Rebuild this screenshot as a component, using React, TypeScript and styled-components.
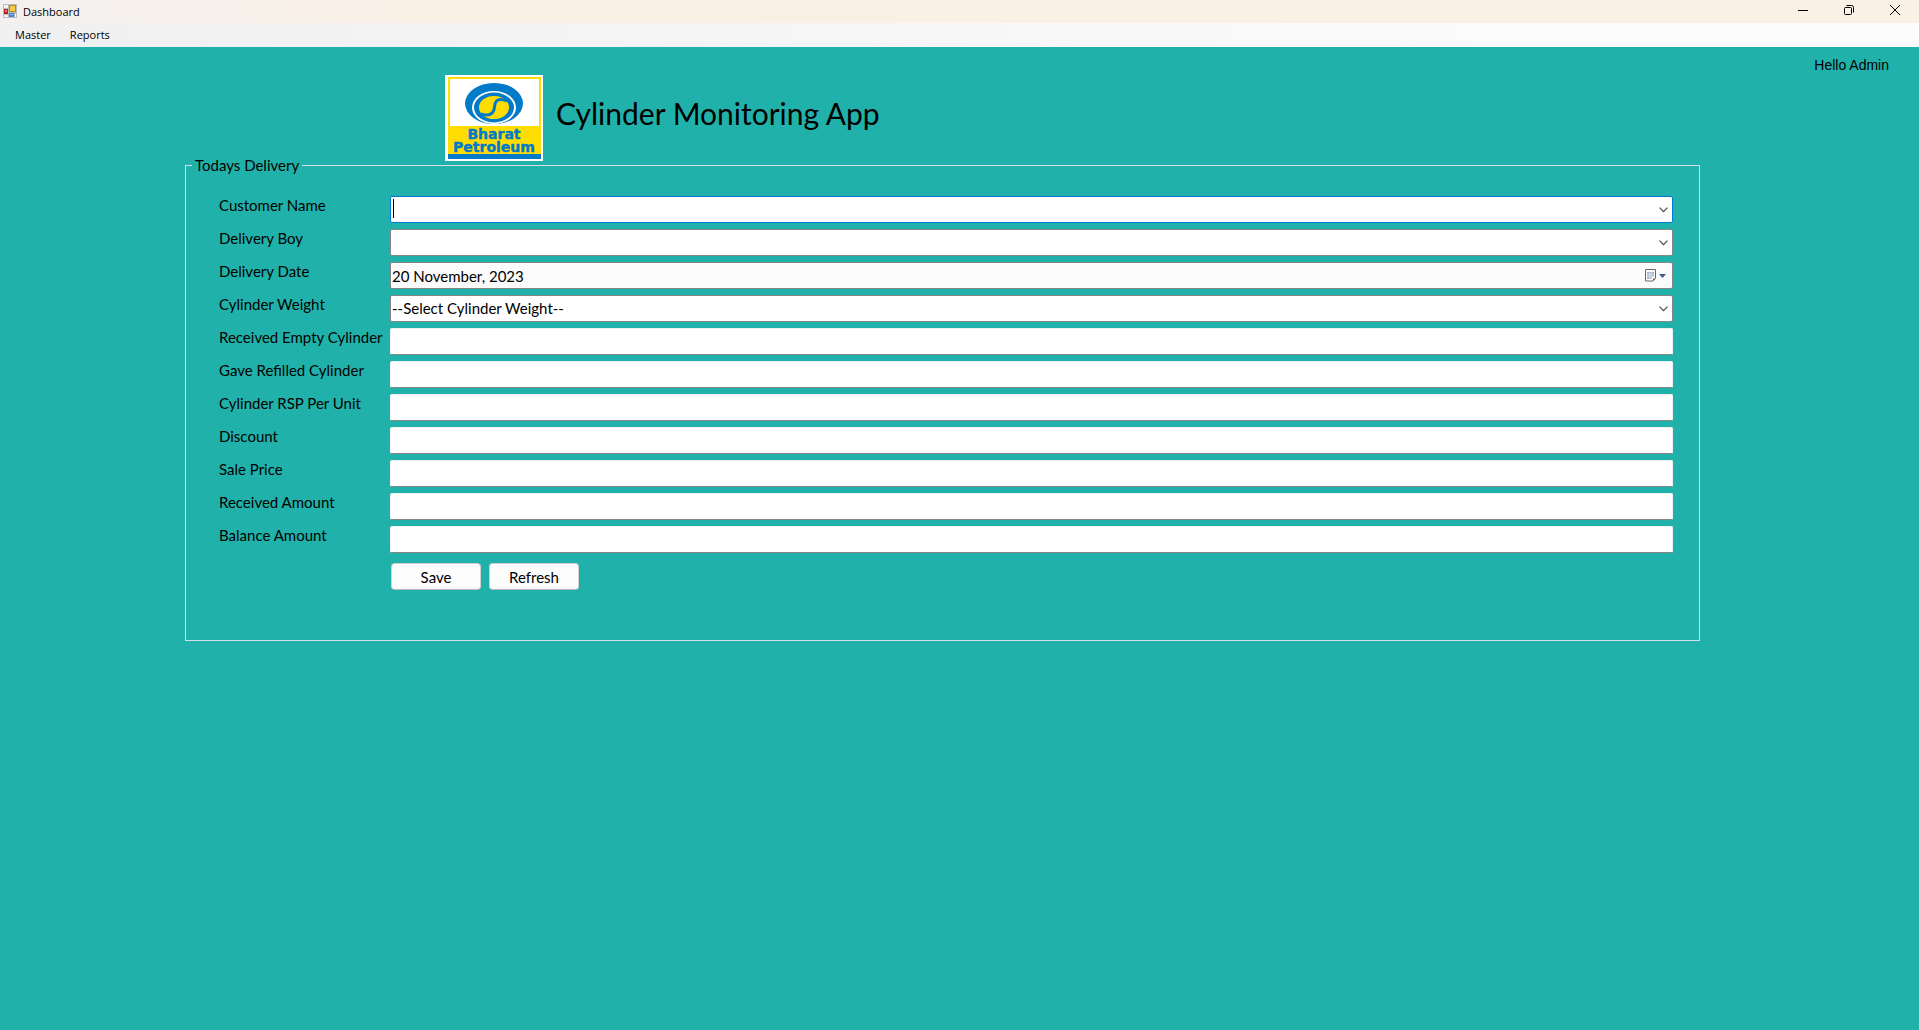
import React from "react";
import styled, { createGlobalStyle, css } from "styled-components";

const GlobalStyle = createGlobalStyle`
  * { box-sizing: border-box; }
  body {
    margin: 0;
    background: #20b2aa;
    color: #000;
    font-family: Lato, "Open Sans", sans-serif;
    font-size: 15px;
  }
  button, input, select { font: inherit; color: inherit; }
`;

const TitleBar = styled.header`
  display: flex;
  align-items: center;
  height: 23px;
  padding: 0 1px 0 3px;
  gap: 5px;
  background: linear-gradient(90deg, #f3f0ef 0, #f9f0e6 400px);
  font: 11px/20px "Open Sans", sans-serif;
`;

const WindowTitle = styled.span`
  flex: 1;
`;

const WindowButtons = styled.div`
  display: flex;
  align-self: stretch;
`;

const WindowButton = styled.button`
  display: grid;
  place-items: center;
  width: 46px;
  height: 20px;
  padding: 0;
  border: 0;
  background: none;
`;

const MenuBar = styled.nav`
  display: flex;
  align-items: center;
  gap: 3px;
  height: 24px;
  padding-left: 7px;
  background: linear-gradient(90deg, #f0f0f0 0, #fcfcfc 85%);
`;

const MenuItem = styled.button`
  padding: 0 8px;
  border: 0;
  background: none;
  font: 11px/20px "Open Sans", sans-serif;
`;

const Greeting = styled.p`
  margin: 0;
  padding: 8px 30px 0;
  text-align: right;
  font: 14px/20px "Liberation Sans", sans-serif;
`;

const Brand = styled.div`
  display: flex;
  align-items: center;
  gap: 13px;
  padding-left: 445px;
`;

const AppTitle = styled.h1`
  margin: 0 0 10px;
  font-size: 30px;
  line-height: 36px;
  font-weight: 400;
`;

const Group = styled.fieldset`
  margin: -6px 219px 0 185px;
  padding: 21px 26px 50px 33px;
  border: 1px solid #d5dfe5;
  min-width: 0;
`;

const GroupTitle = styled.legend`
  margin-left: -27px;
  padding: 0 3px;
  line-height: 20px;
`;

const Fields = styled.div`
  display: grid;
  grid-template-columns: 171px minmax(0, 1fr);
  row-gap: 6px;
`;

const Label = styled.label`
  line-height: 18px;
`;

const boxed = css`
  height: 27px;
  border: 1px solid #868686;
  border-radius: 2px;
  background: #fff;
`;

const TextBox = styled.input`
  ${boxed}
  width: 100%;
  padding: 0 2px;
  border-color: #f0f0f0 #f0f0f0 #868686;
  outline: 0;
`;

const Frame = styled.div<{ $active?: boolean; $tint?: boolean }>`
  ${boxed}
  display: flex;
  align-items: center;
  ${(p) => p.$active && "border-color: #0078d7;"}
  ${(p) => p.$tint && "background: #fbfbfb;"}
`;

const FrameInput = styled.input<{ $caret?: boolean }>`
  flex: 1;
  min-width: 0;
  height: 100%;
  padding: 0 1px;
  border: 0;
  outline: 0;
  background: none;
  ${(p) =>
    p.$caret &&
    `
    caret-color: transparent;
    background: linear-gradient(#000, #000) 2px 2px / 1px 19px no-repeat;
  `}
`;

const DropButton = styled.button`
  display: flex;
  align-items: center;
  gap: 2px;
  height: 100%;
  padding: 0 4px 0 0;
  border: 0;
  background: none;
`;

const DateButton = styled(DropButton)`
  padding-right: 6px;
`;

const SelectWrap = styled.div`
  ${boxed}
  display: grid;
  align-items: center;

  > * { grid-area: 1 / 1; }
  > svg { justify-self: end; margin-right: 4px; pointer-events: none; }
`;

const Select = styled.select`
  width: 100%;
  height: 25px;
  padding: 0 1px 2px;
  border: 0;
  outline: 0;
  appearance: none;
  background: none;
`;

const Actions = styled.div`
  display: flex;
  gap: 8px;
  padding: 10px 0 0 172px;
`;

const ActionButton = styled.button`
  width: 90px;
  height: 27px;
  padding: 0;
  border: 1px solid #d0d0d0;
  border-bottom-color: #b8b8b8;
  border-radius: 4px;
  background: #fdfdfd;
`;

const Chevron = () => (
  <svg width="9" height="6" viewBox="0 0 9 6" fill="none" stroke="#4a4a4a" strokeWidth="1.2" aria-hidden="true">
    <path d="M.5 .7 4.5 4.7 8.5 .7" />
  </svg>
);

const AppIcon = () => (
  <svg width="15" height="15" viewBox="0 0 15 15" aria-hidden="true">
    <rect width="14" height="14" fill="#bcbcc0" />
    <path d="M1 1h4v3H1zM1 11h4v2H1zM12 10h1v3h-1z" fill="#f4f4f6" />
    <rect x="6.500" y="1.500" width="6" height="6" fill="#f8ca45" stroke="#b98a1c" />
    <rect x="1" y="5" width="4" height="5" fill="#b8251d" />
    <rect x="2" y="6" width="2" height="2" fill="#e87a70" />
    <rect x="6" y="9" width="5" height="4" fill="#3f82e0" />
    <rect x="7" y="10" width="3" height="1" fill="#9cc4fa" />
  </svg>
);

const CalendarIcon = () => (
  <svg width="12" height="13" viewBox="0 0 12 13" fill="none" aria-hidden="true">
    <path d="M.5 .5h10v9l-2.500 2.500H.5z" fill="#fff" stroke="#6f6462" />
    <path d="M2 3h7v5H7v2H2z" fill="#aab6c6" />
    <path d="M4.500 3v7M6.500 3v7M2 5.500h7M2 7.500h7" stroke="#e9eef4" strokeWidth=".6" />
    <path d="M8 12V9.500h2.500z" fill="#6f6462" />
  </svg>
);

const DownTriangle = () => (
  <svg width="7" height="4" viewBox="0 0 7 4" aria-hidden="true">
    <path d="M0 0h7L3.500 4z" fill="#44598a" />
  </svg>
);

const Logo = () => (
  <svg width="98" height="86" viewBox="0 0 98 86" role="img" aria-label="Bharat Petroleum">
    <rect width="98" height="86" fill="#fff" />
    <rect x="4" y="3" width="91" height="80" fill="#fff" stroke="#ffdd00" strokeWidth="2" />
    <rect x="3" y="51" width="93" height="28" fill="#ffdd00" />
    <rect x="3" y="79" width="93" height="5" fill="#007ac9" />
    <ellipse cx="49" cy="28.500" rx="29" ry="20.500" fill="#007ac9" />
    <ellipse cx="49" cy="32.500" rx="22" ry="16.500" fill="#fff" />
    <ellipse cx="49" cy="32.500" rx="20" ry="15" fill="#007ac9" />
    <ellipse cx="49" cy="32.500" rx="15" ry="11.500" fill="#ffdd00" />
    <path d="M62 26C53 22 50 26 49.500 32S45 42 36 39" fill="none" stroke="#007ac9" strokeWidth="3" />
    <g fill="#007ac9" stroke="#007ac9" strokeWidth=".4" fontFamily="DejaVu Sans" fontWeight="700" fontSize="14" textAnchor="middle">
      <text x="49" y="64">Bharat</text>
      <text x="49" y="77">Petroleum</text>
    </g>
  </svg>
);

const textFields = [
  { id: "empty", label: "Received Empty Cylinder" },
  { id: "refilled", label: "Gave Refilled Cylinder" },
  { id: "rsp", label: "Cylinder RSP Per Unit" },
  { id: "discount", label: "Discount" },
  { id: "price", label: "Sale Price" },
  { id: "received", label: "Received Amount" },
  { id: "balance", label: "Balance Amount" },
];

export default function App() {
  return (
    <>
      <GlobalStyle />
      <TitleBar>
        <AppIcon />
        <WindowTitle>Dashboard</WindowTitle>
        <WindowButtons>
          <WindowButton aria-label="Minimize">
            <svg width="10" height="10" stroke="#000"><path d="M0 5.500h10" /></svg>
          </WindowButton>
          <WindowButton aria-label="Restore">
            <svg width="10" height="10" fill="none" stroke="#000">
              <rect x=".5" y="2.500" width="7" height="7" rx="1" />
              <path d="M2.500 .5H7.500a2 2 0 0 1 2 2V7.500" />
            </svg>
          </WindowButton>
          <WindowButton aria-label="Close">
            <svg width="10" height="10" stroke="#000"><path d="M0 0 10 10M10 0 0 10" /></svg>
          </WindowButton>
        </WindowButtons>
      </TitleBar>
      <MenuBar>
        <MenuItem>Master</MenuItem>
        <MenuItem>Reports</MenuItem>
      </MenuBar>
      <main>
        <Greeting>Hello Admin</Greeting>
        <Brand>
          <Logo />
          <AppTitle>Cylinder Monitoring App</AppTitle>
        </Brand>
        <Group>
          <GroupTitle>Todays Delivery</GroupTitle>
          <Fields>
            <Label htmlFor="customer">Customer Name</Label>
            <Frame $active>
              <FrameInput id="customer" $caret />
              <DropButton aria-label="Show customers"><Chevron /></DropButton>
            </Frame>
            <Label htmlFor="boy">Delivery Boy</Label>
            <Frame>
              <FrameInput id="boy" />
              <DropButton aria-label="Show delivery boys"><Chevron /></DropButton>
            </Frame>
            <Label htmlFor="date">Delivery Date</Label>
            <Frame $tint>
              <FrameInput id="date" defaultValue="20 November, 2023" />
              <DateButton aria-label="Pick a date"><CalendarIcon /><DownTriangle /></DateButton>
            </Frame>
            <Label htmlFor="weight">Cylinder Weight</Label>
            <SelectWrap>
              <Select id="weight">
                <option>--Select Cylinder Weight--</option>
              </Select>
              <Chevron />
            </SelectWrap>
            {textFields.map((f) => (
              <React.Fragment key={f.id}>
                <Label htmlFor={f.id}>{f.label}</Label>
                <TextBox id={f.id} />
              </React.Fragment>
            ))}
          </Fields>
          <Actions>
            <ActionButton>Save</ActionButton>
            <ActionButton>Refresh</ActionButton>
          </Actions>
        </Group>
      </main>
    </>
  );
}
